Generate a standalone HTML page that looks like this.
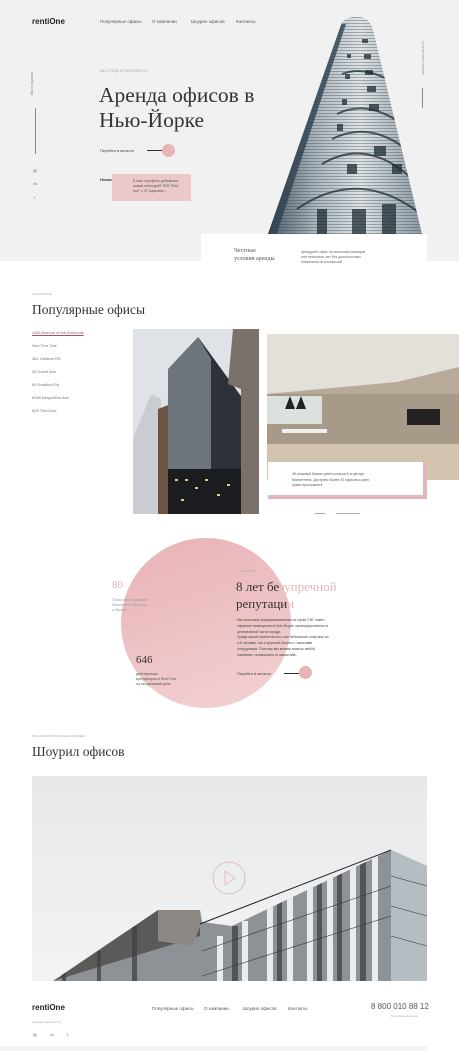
<!DOCTYPE html>
<html><head><meta charset="utf-8"><style>
*{margin:0;padding:0;box-sizing:border-box}
body{width:459px;height:1051px;position:relative;background:#fff;font-family:"Liberation Sans",sans-serif;color:#333;overflow:hidden}
.a{position:absolute}
.serif{font-family:"Liberation Serif",serif;color:#333}
.s{font-size:4px;color:#777;white-space:nowrap}
.nav{font-size:4.5px;color:#555}
</style></head><body>
<div class="a" style="left:0;top:0;width:459px;height:261px;background:#f1f1f1"></div>
<div class="a" style="left:32px;top:17px;font-size:8px;font-weight:bold;color:#222">rentiOne</div>
<div class="a nav" style="left:100px;top:19px">Популярные офисы</div>
<div class="a nav" style="left:152px;top:19px">О компании</div>
<div class="a nav" style="left:191px;top:19px">Шоурил офисов</div>
<div class="a nav" style="left:236px;top:19px">Контакты</div>
<div class="a s" style="left:30px;transform:rotate(-90deg);transform-origin:left top;top:95px;font-size:3.5px">Мы в соцсетях</div>
<div class="a" style="left:35px;top:108px;width:1px;height:46px;background:#888"></div>
<div class="a s" style="left:33px;top:168px">▤</div><div class="a s" style="left:33px;top:181px">vk</div><div class="a s" style="left:34px;top:195px">f</div>
<div class="a s" style="left:100px;top:69px;font-size:3.5px;color:#aaa">МЫ СРЕДИ БРОКЕРОВ В NY</div>
<div class="a serif" style="left:99px;top:83px;font-size:21.5px;line-height:25px;color:#333">Аренда офисов в<br>Нью-Йорке</div>
<div class="a s" style="left:100px;top:148px;color:#444">Перейти в каталог</div>
<div class="a" style="left:147px;top:150px;width:22px;height:1px;background:#333"></div>
<div class="a" style="left:162px;top:144px;width:13px;height:13px;border-radius:50%;background:#e8b4b6"></div>
<div class="a" style="left:100px;top:177px;font-size:4px;font-weight:bold;color:#333">Новости</div>
<div class="a" style="left:112px;top:174px;width:79px;height:27px;background:#ebc8c9"></div>
<div class="a s" style="left:133px;top:179px;font-size:3.5px;line-height:5px;color:#555">В наш портфель добавился<br>новый небоскрёб "825 Third<br>Ave" с 37 офисами...</div>
<svg class="a" style="left:262px;top:14px" width="166" height="222" viewBox="0 0 166 222">
<defs><linearGradient id="g" x1="0" x2="1"><stop offset="0" stop-color="#4a5d68"/><stop offset=".3" stop-color="#a9b3ba"/><stop offset=".6" stop-color="#dfe3e5"/><stop offset="1" stop-color="#8d9aa3"/></linearGradient>
<pattern id="h" width="4" height="3" patternUnits="userSpaceOnUse"><rect width="4" height="1" fill="#2a3a44" opacity=".35"/></pattern>
<clipPath id="c"><path d="M6 220 L80 8 Q90 0 102 4 Q110 8 112 20 L160 220 Z"/></clipPath></defs>
<path d="M6 220 L80 8 Q90 0 102 4 Q110 8 112 20 L160 220 Z" fill="url(#g)"/>
<g clip-path="url(#c)">
<rect width="166" height="222" fill="url(#h)"/>
<path d="M0 222 L78 10 L84 10 L14 222Z" fill="#2e4150" opacity=".8"/>
<g stroke="#1f2c34" stroke-width="2" fill="none" opacity=".75">
<path d="M60 150 Q110 120 160 175"/><path d="M35 195 Q100 150 165 205"/><path d="M75 100 Q105 85 140 110"/><path d="M70 125 Q110 105 150 140"/><path d="M80 60 Q100 52 125 65"/>
</g>
<g fill="#1f2c34" opacity=".75">
<rect x="100" y="25" width="6" height="4"/><rect x="102" y="40" width="7" height="5"/><rect x="103" y="56" width="8" height="5"/><rect x="105" y="72" width="9" height="6"/><rect x="107" y="90" width="10" height="7"/><rect x="112" y="132" width="12" height="10"/><rect x="90" y="195" width="14" height="27"/><rect x="120" y="190" width="14" height="32"/><rect x="55" y="195" width="10" height="27"/>
<rect x="85" y="40" width="4" height="4"/><rect x="83" y="60" width="5" height="5"/><rect x="80" y="85" width="5" height="6"/><rect x="75" y="110" width="6" height="7"/><rect x="85" y="150" width="10" height="10"/><rect x="130" y="150" width="10" height="10"/>
</g></g></svg>
<div class="a s" style="left:421px;top:75px;transform:rotate(-90deg);transform-origin:left top;font-size:3px;color:#888">АРЕНДА ОФИСОВ В NY</div>
<div class="a" style="left:422px;top:88px;width:1px;height:20px;background:#888"></div>
<div class="a" style="left:201px;top:234px;width:226px;height:30px;background:#fff"></div>
<div class="a serif" style="left:234px;top:248px;font-size:6px;line-height:7.5px;color:#555">Честные<br>условия аренды</div>
<div class="a s" style="left:301px;top:250px;font-size:3.5px;line-height:5px;color:#666">Арендуйте офис на несколько месяцев<br>или несколько лет без долгосрочных<br>обязательств и комиссий</div>

<div class="a s" style="left:32px;top:292px;font-size:3px;color:#aaa">АКТУАЛЬНОЕ</div>
<div class="a serif" style="left:32px;top:302px;font-size:13.5px">Популярные офисы</div>
<div class="a s" style="left:32px;top:330px;color:#a05560;text-decoration:underline">1155 Avenue of the Americas</div>
<div class="a s" style="left:32px;top:343px">One Five One</div>
<div class="a s" style="left:32px;top:356px">481 Hallseel RD</div>
<div class="a s" style="left:32px;top:369px">28 Gurell Ave</div>
<div class="a s" style="left:32px;top:382px">69 Sradford Rd</div>
<div class="a s" style="left:32px;top:395px">6065 Bergonfins Ave</div>
<div class="a s" style="left:32px;top:408px">825 Third Ave</div>
<svg class="a" style="left:133px;top:329px" width="126" height="185" viewBox="0 0 126 185">
<rect width="126" height="185" fill="#dfe3e8"/>
<polygon points="0,110 18,65 28,70 28,185 0,185" fill="#c9cdd1"/>
<polygon points="25,80 38,75 38,185 25,185" fill="#6b5444"/>
<polygon points="35,40 65,8 110,70 110,185 35,185" fill="#6e747c"/>
<polygon points="65,8 110,70 110,185 78,185 78,30" fill="#2d3138"/>
<rect x="35" y="140" width="75" height="45" fill="#1c1d20"/>
<g fill="#e8c98a"><rect x="42" y="150" width="3" height="2"/><rect x="52" y="150" width="3" height="2"/><rect x="62" y="158" width="3" height="2"/><rect x="72" y="150" width="3" height="2"/><rect x="84" y="165" width="3" height="2"/><rect x="94" y="155" width="3" height="2"/><rect x="48" y="170" width="3" height="2"/></g>
<polygon points="100,0 126,0 126,185 108,185 108,60 95,55" fill="#7a716b"/>
</svg>
<svg class="a" style="left:267px;top:334px" width="192" height="146" viewBox="0 0 192 146">
<rect width="192" height="146" fill="#b7aa98"/>
<polygon points="0,0 192,0 192,33 130,48 0,60" fill="#e3e0da"/>
<rect x="0" y="60" width="192" height="50" fill="#a79a88"/>
<rect x="0" y="62" width="55" height="28" fill="#dbe1dd"/>
<rect x="140" y="75" width="33" height="16" fill="#222"/>
<polygon points="0,110 192,110 192,146 0,146" fill="#d2c4ae"/>
<rect x="15" y="95" width="45" height="4" fill="#eee"/>
<g fill="#222"><path d="M18 75 L23 62 L28 75Z"/><path d="M29 75 L34 62 L39 75Z"/></g>
</svg>
<div class="a" style="left:268px;top:462px;width:159px;height:37px;background:#e3b7ba"></div>
<div class="a" style="left:268px;top:462px;width:155px;height:33px;background:#fff"></div>
<div class="a s" style="left:292px;top:472px;font-size:3.5px;line-height:5.5px;color:#555">45-этажный бизнес центр класса А в центре<br>Манхэттена. Доступно более 40 офисов и open<br>space пространств</div>
<div class="a" style="left:315px;top:513px;width:10px;height:1px;background:#aaa"></div>
<div class="a" style="left:336px;top:513px;width:24px;height:1px;background:#aaa"></div>

<div class="a" style="left:121px;top:538px;width:170px;height:170px;border-radius:50%;background:linear-gradient(160deg,#e8b2b6,#f2d2d4)"></div>
<div class="a serif" style="left:112px;top:579px;font-size:11px;color:#e4b1b4">80</div>
<div class="a s" style="left:112px;top:598px;font-size:3.5px;line-height:5px;color:#999">Объектов в Бруклине,<br>Манхэттене, Бронксе<br>и Квинсе</div>
<div class="a serif" style="left:136px;top:654px;font-size:11px">646</div>
<div class="a s" style="left:136px;top:672px;font-size:3.5px;line-height:5px;color:#555">действующих<br>арендаторов в Renti One<br>на сегодняшний день</div>
<div class="a s" style="left:237px;top:569px;font-size:3px;color:#aaa">О RENTI ONE</div>
<div class="a serif" style="left:236px;top:578px;font-size:13px;line-height:17px">8 лет бе<span style="color:#e6b5b8">зупречной</span><br>репутаци<span style="color:#e6b5b8">и</span></div>
<div class="a s" style="left:237px;top:618px;font-size:3.5px;line-height:5.8px;color:#444">Мы помогаем предпринимателям из стран СНГ найти<br>офисные помещения в Нью-Йорке, преимущественно в<br>центральной части города.<br>Среди наших клиентов есть как небольшие стартапы из<br>4-8 человек, так и крупный бизнес с тысячами<br>сотрудников. Поэтому мы можем помочь любой<br>компании, независимо от масштаба.</div>
<div class="a s" style="left:237px;top:671px;color:#444">Перейти в каталог</div>
<div class="a" style="left:284px;top:673px;width:22px;height:1px;background:#333"></div>
<div class="a" style="left:299px;top:666px;width:13px;height:13px;border-radius:50%;background:#e8b4b6"></div>

<div class="a s" style="left:32px;top:734px;font-size:3px;color:#aaa">МЫ СОБРАЛИ ВСЕ В ОДНОМ ВИДЕО</div>
<div class="a serif" style="left:32px;top:744px;font-size:13.5px">Шоурил офисов</div>
<svg class="a" style="left:32px;top:776px" width="395" height="205" viewBox="0 0 395 205">
<defs><linearGradient id="sk" x1="0" y1="0" x2="0" y2="1"><stop offset="0" stop-color="#e6e8ea"/><stop offset="1" stop-color="#f3f3f3"/></linearGradient>
<clipPath id="bc"><polygon points="21,205 126,134 168,134 170,146 200,150 359,74 395,90 395,205"/></clipPath></defs>
<rect width="395" height="205" fill="url(#sk)"/>
<polygon points="21,205 126,134 168,134 170,146 200,150 359,74 395,90 395,205" fill="#8e9296"/>
<g clip-path="url(#bc)">
<polygon points="21,205 126,134 168,134 168,160 21,205" fill="#5b5a59"/>
<polygon points="126,134 168,134 170,146 160,170 126,165" fill="#8d8884"/>
<polygon points="359,74 395,90 395,205 359,205" fill="#b4bdc2"/>
<g fill="#e9ecee">
<rect x="235" y="130" width="6" height="75"/><rect x="255" y="120" width="6" height="85"/><rect x="275" y="110" width="6" height="95"/><rect x="295" y="100" width="6" height="105"/><rect x="318" y="90" width="6" height="115"/><rect x="340" y="80" width="6" height="125"/><rect x="210" y="145" width="6" height="60"/><rect x="185" y="160" width="6" height="45"/>
</g>
<g fill="#3c4046" opacity=".75"><rect x="245" y="120" width="5" height="85"/><rect x="285" y="105" width="5" height="100"/><rect x="328" y="85" width="6" height="120"/><rect x="305" y="95" width="5" height="110"/><rect x="200" y="150" width="6" height="55"/><rect x="30" y="195" width="4" height="10"/><rect x="65" y="175" width="4" height="30"/><rect x="100" y="150" width="5" height="55"/></g>
<g stroke="#2f3338" stroke-width=".6"><line x1="170" y1="175" x2="359" y2="110"/><line x1="170" y1="200" x2="359" y2="140"/><line x1="359" y1="100" x2="395" y2="110"/><line x1="359" y1="130" x2="395" y2="140"/><line x1="359" y1="160" x2="395" y2="170"/></g>
</g>
<line x1="168" y1="148" x2="359" y2="74" stroke="#222" stroke-width="1"/>
<circle cx="197" cy="102" r="16" fill="none" stroke="#e0a8ac" stroke-width=".7"/>
<path d="M193 95 L203 102 L193 109 Z" fill="none" stroke="#e0a8ac" stroke-width=".7"/>
</svg>

<div class="a" style="left:32px;top:1003px;font-size:8px;font-weight:bold;color:#222">rentiOne</div>
<div class="a s" style="left:32px;top:1020px;font-size:3px;color:#aaa">Аренда офисов в NY</div>
<div class="a s" style="left:33px;top:1032px">▤</div><div class="a s" style="left:50px;top:1032px">vk</div><div class="a s" style="left:67px;top:1032px">f</div>
<div class="a nav" style="left:152px;top:1006px">Популярные офисы</div>
<div class="a nav" style="left:204px;top:1006px">О компании</div>
<div class="a nav" style="left:243px;top:1006px">Шоурил офисов</div>
<div class="a nav" style="left:288px;top:1006px">Контакты</div>
<div class="a" style="left:371px;top:1002px;font-size:8px;color:#555">8 800 010 88 12</div>
<div class="a s" style="left:391px;top:1014px;font-size:3px;color:#aaa">Бесплатный звонок</div>
<div class="a" style="left:0;top:1046px;width:427px;height:5px;background:#f3f3f3"></div>
</body></html>
